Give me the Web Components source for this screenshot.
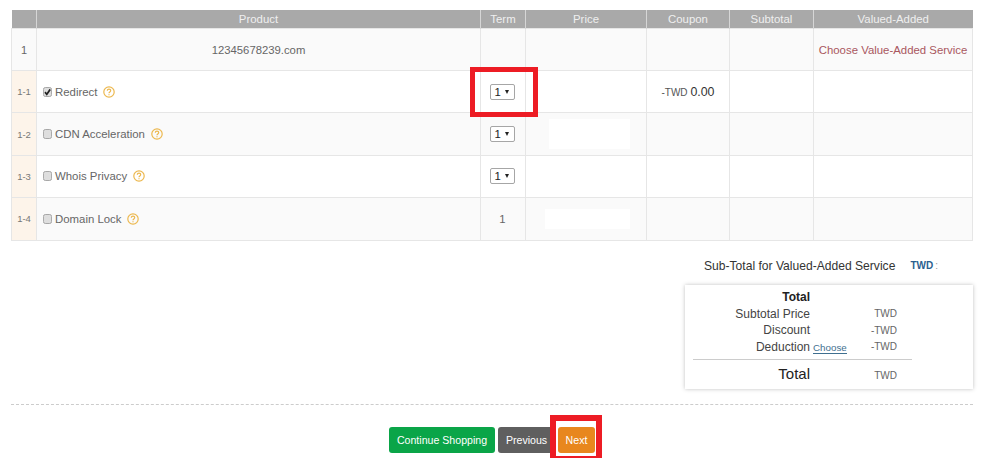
<!DOCTYPE html>
<html>
<head>
<meta charset="utf-8">
<title>Value-Added Services</title>
<style>
	html, body { margin: 0; background: #fff; }
	body { font-family: "Liberation Sans", Arial, sans-serif; color: #555; }
</style>
</head>
<body>
<cart-page>
	<cart-table></cart-table>
	<sub-total-line>Sub-Total for Valued-Added Service</sub-total-line>
	<summary-box></summary-box>
	<action-bar>
		<action-button color="#0aa548" width="106">Continue Shopping</action-button>
		<action-button color="#5f5f5f" width="57">Previous</action-button>
		<action-button color="#e8871e" width="37">Next</action-button>
	</action-bar>
	<red-highlight x="470" y="67" w="68" h="50" t="5"></red-highlight>
	<red-highlight x="550" y="415" w="52" h="47" t="6"></red-highlight>
</cart-page>

<script>
(function() {
	class CartPage extends HTMLElement {
		constructor() {
			super();
			const shadow = this.attachShadow({ mode: 'open' });
			shadow.innerHTML = `
				<style>
					:host { display: block; position: relative; width: 1000px; height: 458px; overflow: hidden; box-sizing: border-box; padding: 10px 27px 0 11px; }
				</style>
				<slot></slot>
			`;
		}
	}

	class HelpIcon extends HTMLElement {
		constructor() {
			super();
			const shadow = this.attachShadow({ mode: 'open' });
			shadow.innerHTML = `
				<style>
					:host { display: inline-block; margin-left: 6px; vertical-align: -2px; }
					svg { display: block; }
				</style>
				<svg width="12" height="12" viewBox="0 0 12 12" fill="none" stroke="#ecb84f">
					<circle cx="6" cy="6" r="5.2" stroke-width="1.2"/>
					<path d="M4.3 4.7c0-1 .8-1.6 1.7-1.6s1.7.6 1.7 1.5c0 1.3-1.7 1.3-1.7 2.6" stroke-width="1.2"/>
					<path d="M6 8.2v1.1" stroke-width="1.2"/>
				</svg>
			`;
		}
	}

	class TickBox extends HTMLElement {
		constructor() {
			super();
			const shadow = this.attachShadow({ mode: 'open' });
			const tick = this.hasAttribute('checked')
				? '<path d="M2.2 5.2l2 2.2 3.8-5" fill="none" stroke="#222" stroke-width="1.8"/>'
				: '';
			shadow.innerHTML = `
				<style>
					:host { display: inline-block; margin-right: 3px; vertical-align: -1px; }
					svg { display: block; }
				</style>
				<svg width="9" height="10" viewBox="0 0 10 10" preserveAspectRatio="none">
					<rect x=".5" y=".5" width="9" height="9" rx="2" fill="#dedede" stroke="#a3a3a3"/>
					${tick}
				</svg>
			`;
		}
	}

	class TermSelect extends HTMLElement {
		constructor() {
			super();
			const shadow = this.attachShadow({ mode: 'open' });
			shadow.innerHTML = `
				<style>
					:host { display: inline-flex; align-items: center; justify-content: space-between; box-sizing: border-box; width: 25px; height: 16px; padding: 0 5px 0 4px; margin-left: -1px; background: #fff; border: 1px solid #a6a6a6; border-radius: 2px; color: #222; font-size: 11.4px; vertical-align: middle; }
					i { width: 0; height: 0; border: 2.5px solid transparent; border-top: 4px solid #222; border-bottom: 0; }
				</style>
				<span>1</span><i></i>
			`;
		}
	}

	class CartTable extends HTMLElement {
		constructor() {
			super();
			const shadow = this.attachShadow({ mode: 'open' });

			const rows = [
				{ no: '1-1', name: 'Redirect', checked: true, term: 'select', coupon: true },
				{ no: '1-2', name: 'CDN Acceleration', term: 'select', mask: 'tall' },
				{ no: '1-3', name: 'Whois Privacy', term: 'select' },
				{ no: '1-4', name: 'Domain Lock', term: 'text', mask: 'short' }
			];

			shadow.innerHTML = `
				<style>
					:host { display: block; width: 961px; font-size: 11.3px; color: #666; }
					table { width: 961px; table-layout: fixed; border-collapse: collapse; }
					th { height: 18px; padding: 0; background: #a9a9a9; color: #efefef; font-weight: normal; font-size: 11.4px; border-left: 1px solid #d6d6d6; border-right: 1px solid #d6d6d6; }
					th:first-child { border-left: 0; }
					th:last-child { border-right: 0; }
					td { padding: 0; border: 1px solid #e6e6e6; text-align: center; }
					tr.main td { height: 41px; background: #fafafa; }
					tr.sub td { height: 41.4px; background: #fff; }
					tr.sub.alt td { background: #fafafa; }
					tr.sub td.no { background: #fdf4ea; font-size: 9.5px; color: #777; }
					tr.main td.no { font-size: 11px; }
					td.name { text-align: left; padding-left: 6px; font-size: 11.4px; }
					td.price { text-align: right; }
					td.one { padding-right: 1px; }
					a { color: #a9575e; text-decoration: none; font-size: 11.4px; }
					.mask { display: block; margin-left: auto; margin-right: 16px; background: #fff; }
					.mask.tall { width: 81px; height: 30px; }
					.mask.short { width: 85px; height: 20px; }
					.coupon { font-size: 10px; color: #555; }
					.coupon b { font-weight: normal; font-size: 12.4px; color: #333; }
				</style>
				<table>
					<colgroup>
						<col style="width:25px"><col style="width:444px"><col style="width:45px"><col style="width:121px"><col style="width:83px"><col style="width:84px"><col style="width:159px">
					</colgroup>
					<thead>
						<tr><th></th><th>Product</th><th>Term</th><th>Price</th><th>Coupon</th><th>Subtotal</th><th>Valued-Added</th></tr>
					</thead>
					<tbody>
						<tr class="main">
							<td class="no">1</td><td>12345678239.com</td><td></td><td></td><td></td><td></td>
							<td><a href="#">Choose Value-Added Service</a></td>
						</tr>
						${this.getRows(rows)}
					</tbody>
				</table>
			`;
		}

		getRows(rows) {
			return rows.map((row, i) => `
				<tr class="sub ${i % 2 ? 'alt' : ''}">
					<td class="no">${row.no}</td>
					<td class="name"><tick-box ${row.checked ? 'checked' : ''}></tick-box>${row.name}<help-icon></help-icon></td>
					<td class="one">${row.term === 'select' ? '<term-select></term-select>' : '1'}</td>
					<td class="price">${row.mask ? `<span class="mask ${row.mask}"></span>` : ''}</td>
					<td>${row.coupon ? '<span class="coupon">-TWD <b>0.00</b></span>' : ''}</td>
					<td></td>
					<td></td>
				</tr>
			`).join('');
		}
	}

	class SubTotalLine extends HTMLElement {
		constructor() {
			super();
			const shadow = this.attachShadow({ mode: 'open' });
			shadow.innerHTML = `
				<style>
					:host { display: flex; align-items: center; height: 16px; margin-top: 17px; padding-left: 693px; font-size: 12.1px; color: #333; }
					b { margin-left: 15px; font-size: 10px; color: #2a5f8f; }
					span { font-size: 10px; color: #999; margin-left: 2px; }
				</style>
				<slot></slot><b>TWD</b><span>:</span>
			`;
		}
	}

	class SummaryBox extends HTMLElement {
		constructor() {
			super();
			const shadow = this.attachShadow({ mode: 'open' });
			shadow.innerHTML = `
				<style>
					:host { display: block; box-sizing: border-box; width: 288px; height: 104px; margin: 11px 0 0 674px; padding: 4px 0 0 8px; background: #fff; box-shadow: 0 0 4px rgba(0,0,0,.25); font-size: 12px; color: #444; }
					.line { display: grid; grid-template-columns: 117px 87px; width: 219px; height: 16.7px; align-items: center; }
					.label { text-align: right; white-space: nowrap; }
					.val { text-align: right; font-size: 10px; color: #666; }
					.head .label { font-weight: bold; color: #222; }
					.deduct { position: relative; }
					a { position: absolute; left: 100%; top: 2px; margin-left: 3px; font-size: 9.8px; color: #3f6f8f; text-decoration: none; border-bottom: 1px solid #3f6f8f; }
					hr { width: 219px; height: 1px; margin: 4px 0 5px; border: 0; background: #ccc; }
					.grand .label { font-size: 15px; color: #222; }
					.grand .val { padding-top: 3px; }
				</style>
				<div class="line head"><span class="label">Total</span><span class="val"></span></div>
				<div class="line"><span class="label">Subtotal Price</span><span class="val">TWD</span></div>
				<div class="line"><span class="label">Discount</span><span class="val">-TWD</span></div>
				<div class="line"><span class="label deduct">Deduction<a href="#">Choose</a></span><span class="val">-TWD</span></div>
				<hr>
				<div class="line grand"><span class="label">Total</span><span class="val">TWD</span></div>
			`;
		}
	}

	class ActionBar extends HTMLElement {
		constructor() {
			super();
			const shadow = this.attachShadow({ mode: 'open' });
			shadow.innerHTML = `
				<style>
					:host { display: flex; justify-content: flex-start; gap: 3px; height: 26px; margin-top: 15px; padding: 22px 0 0 378px; border-top: 1px dashed #ccc; }
				</style>
				<slot></slot>
			`;
		}
	}

	class ActionButton extends HTMLElement {
		constructor() {
			super();
			const shadow = this.attachShadow({ mode: 'open' });
			const width = this.getAttribute('width');
			shadow.innerHTML = `
				<style>
					:host { display: flex; align-items: center; justify-content: center; width: ${width}px; height: 26px; border-radius: 3px; background: ${this.getAttribute('color')}; color: #fff; font-size: 10.6px; white-space: nowrap; }
				</style>
				<slot></slot>
			`;
		}
	}

	class RedHighlight extends HTMLElement {
		constructor() {
			super();
			const shadow = this.attachShadow({ mode: 'open' });
			const attr = name => this.getAttribute(name);
			shadow.innerHTML = `
				<style>
					:host { display: block; position: absolute; box-sizing: border-box; left: ${attr('x')}px; top: ${attr('y')}px; width: ${attr('w')}px; height: ${attr('h')}px; border: ${attr('t')}px solid #ed1c24; pointer-events: none; }
				</style>
			`;
		}
	}

	customElements.define('cart-page', CartPage);
	customElements.define('help-icon', HelpIcon);
	customElements.define('tick-box', TickBox);
	customElements.define('term-select', TermSelect);
	customElements.define('cart-table', CartTable);
	customElements.define('sub-total-line', SubTotalLine);
	customElements.define('summary-box', SummaryBox);
	customElements.define('action-bar', ActionBar);
	customElements.define('action-button', ActionButton);
	customElements.define('red-highlight', RedHighlight);
})();
</script>
</body>
</html>
